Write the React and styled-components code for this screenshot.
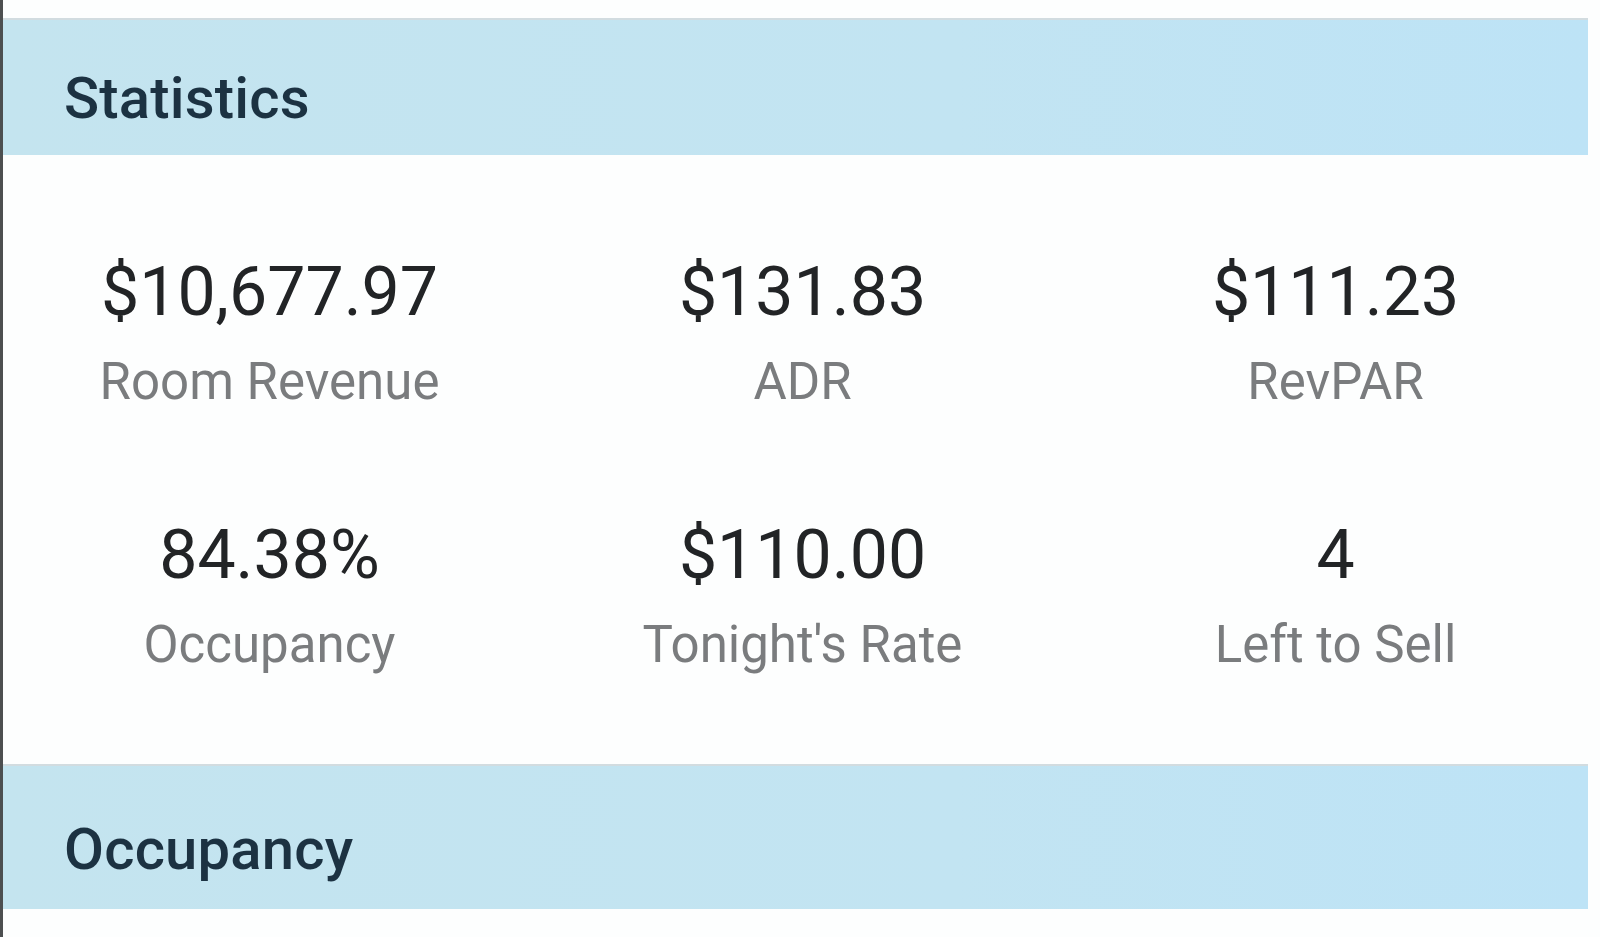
import React from "react";
import styled, { createGlobalStyle } from "styled-components";

const Global = createGlobalStyle`
  html, body {
    margin: 0;
    padding: 0;
    background: #ffffff;
  }
  body {
    font-family: Roboto, "Liberation Sans", sans-serif;
    overflow: hidden;
  }
`;

const Page = styled.div`
  width: 1600px;
  height: 937px;
  box-sizing: border-box;
  border-left: 3px solid #4d4f50;
  padding-top: 18px;
  background: #fdfefe;
  overflow: hidden;
`;

const SectionBar = styled.div`
  height: ${(p) => p.$height || 137}px;
  box-sizing: border-box;
  margin-right: 12px;
  border-top: 2px solid #d2dce0;
  background: linear-gradient(90deg, #c4e4ef 0%, #c2e4f2 60%, #bde3f6 100%);
  padding: ${(p) => p.$top || 44}px 0 0 61px;
  font-size: 58px;
  font-weight: 500;
  color: #1c3242;
  letter-spacing: 0.2px;
`;

const StatsGrid = styled.div`
  display: grid;
  grid-template-columns: repeat(3, 533px);
  row-gap: 114px;
  padding: 103px 0 94px;
`;

const Stat = styled.div`
  display: flex;
  flex-direction: column;
  align-items: center;
  gap: 30px;
`;

const Value = styled.div`
  font-size: 68px;
  line-height: 68px;
  color: #222426;
  white-space: nowrap;
`;

const Label = styled.div`
  font-size: 51px;
  line-height: 51px;
  color: #7a7c7e;
  white-space: nowrap;
`;

const stats = [
  { value: "$10,677.97", label: "Room Revenue" },
  { value: "$131.83", label: "ADR" },
  { value: "$111.23", label: "RevPAR" },
  { value: "84.38%", label: "Occupancy" },
  { value: "$110.00", label: "Tonight's Rate" },
  { value: "4", label: "Left to Sell" },
];

export default function App() {
  return (
    <Page>
      <Global />
      <SectionBar>Statistics</SectionBar>
      <StatsGrid>
        {stats.map((s) => (
          <Stat key={s.label}>
            <Value>{s.value}</Value>
            <Label>{s.label}</Label>
          </Stat>
        ))}
      </StatsGrid>
      <SectionBar $height={145} $top={49}>Occupancy</SectionBar>
    </Page>
  );
}
